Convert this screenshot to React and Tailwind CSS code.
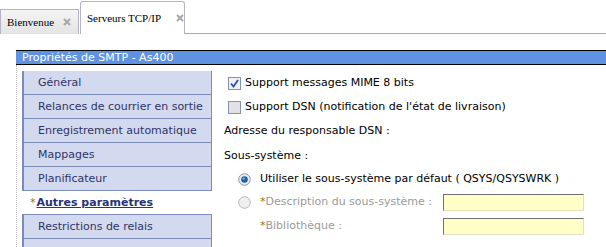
import React from "react"

const navItems = [
  "Général",
  "Relances de courrier en sortie",
  "Enregistrement automatique",
  "Mappages",
  "Planificateur",
  "Autres paramètres",
  "Restrictions de relais",
  "",
]

function CloseX() {
  return (
    <svg width="8" height="8" viewBox="0 0 8 8" className="shrink-0">
      <path d="M1 1 L7 7 M7 1 L1 7" stroke="#a8a8a8" strokeWidth="2" />
    </svg>
  )
}

function Checkbox({ checked }) {
  return (
    <span className={`w-[13px] h-[13px] border border-[#8593ac] flex items-center justify-center shrink-0 ${checked ? "bg-[#eef0f6]" : "bg-[#e2e2e6]"}`}>
      {checked && (
        <svg width="9" height="9" viewBox="0 0 9 9">
          <path d="M1 4.5 L3.5 7.5 L8 1" stroke="#2d4fa8" strokeWidth="1.8" fill="none" />
        </svg>
      )}
    </span>
  )
}

function Radio({ selected }) {
  return (
    <svg width="13" height="13" viewBox="0 0 13 13" className="shrink-0">
      <circle cx="6.5" cy="6.5" r="5.8" fill={selected ? "#e8ecf2" : "#efefef"} stroke={selected ? "#8a96a8" : "#b8b8b8"} strokeWidth="1" />
      {selected && <circle cx="6.5" cy="6.5" r="3.3" fill="#1f5fa8" />}
      {selected && <circle cx="5.8" cy="5.6" r="1.2" fill="#6fb0e8" />}
    </svg>
  )
}

export default function App() {
  return (
    <div className="w-[606px] h-[247px] overflow-hidden bg-white font-['DejaVu_Sans',sans-serif] text-[11px]">
      {/* onglets */}
      <div className="h-[34px] flex items-end">
        <div className="w-[79px] h-[25px] border border-b-0 border-[#b4b4c8] bg-gradient-to-b from-[#f4f4f4] to-[#e4e4e4] flex items-center pl-[6px] gap-[9px] font-['Liberation_Serif',serif] text-[11px] text-black whitespace-nowrap">
          <span>Bienvenue</span>
          <CloseX />
        </div>
        <div className="ml-[1px] w-[105px] h-[33px] border border-b-0 border-[#b4b4c8] rounded-t-[3px] bg-white flex items-center pl-[6px] gap-[15px] font-['Liberation_Serif',serif] text-[11px] text-black whitespace-nowrap">
          <span>Serveurs TCP/IP</span>
          <CloseX />
        </div>
        <div className="flex-1 border-b border-[#a8a8c0]" />
      </div>

      {/* panneau */}
      <div className="mt-[16px] ml-[16px]">
        <div className="h-[15px] border-y border-black bg-[#5f93e2] text-white pl-[6px] leading-[13px] text-[11px] whitespace-nowrap">
          Propriétés de SMTP - As400
        </div>
        <div className="flex border-l border-dotted border-[#c0c0c0] pl-[5px]">
          <div className="w-[190px] mt-[6px] shrink-0">
            {navItems.map((item, i) => {
              const active = item === "Autres paramètres"
              return active ? (
                <div key={i} className="h-[24px] pt-[2px] bg-white border-b border-[#7b8cb8] flex items-center pl-[8px] text-[#28337a]">
                  <span className="text-[#8a7420] mr-[1px]">*</span>
                  <span className="font-bold underline">{item}</span>
                </div>
              ) : (
                <div key={i} className="h-[24px] pt-[2px] bg-[#d3d9ef] border-l-2 border-r border-b border-[#7b8cb8] flex items-center pl-[14px] text-[#2f3566]">
                  {item}
                </div>
              )
            })}
          </div>

          <div className="flex-1 flex flex-col pt-[6px] text-black">
            <div className="h-[24px] flex items-center pl-[16px] gap-[4px]">
              <Checkbox checked />
              <span>Support messages MIME 8 bits</span>
            </div>
            <div className="h-[24px] flex items-center pl-[16px] gap-[4px]">
              <Checkbox />
              <span>Support DSN (notification de l'état de livraison)</span>
            </div>
            <div className="h-[25px] flex items-center pl-[12px]">Adresse du responsable DSN :</div>
            <div className="h-[24px] flex items-center pl-[12px]">Sous-système :</div>
            <div className="h-[22px] flex items-center pl-[26px] gap-[9px]">
              <Radio selected />
              <span>Utiliser le sous-système par défaut ( QSYS/QSYSWRK )</span>
            </div>
            <div className="h-[24px] flex items-center pl-[26px]">
              <Radio />
              <span className="ml-[9px] text-[#8a7420]">*</span>
              <span className="text-[#9a9a9a] w-[177px]">Description du sous-système :</span>
              <span className="w-[141px] h-[17px] bg-[#ffffc8] border-l border-t border-[#707070] border-r border-b border-r-[#e0e0c0] border-b-[#e0e0c0]" />
            </div>
            <div className="h-[24px] flex items-center pl-[48px]">
              <span className="text-[#8a7420]">*</span>
              <span className="text-[#9a9a9a] w-[177px]">Bibliothèque :</span>
              <span className="w-[141px] h-[17px] bg-[#ffffc8] border-l border-t border-[#707070] border-r border-b border-r-[#e0e0c0] border-b-[#e0e0c0]" />
            </div>
            <div className="h-[29px] flex items-center pl-[12px] whitespace-nowrap">
              Intervalle de temps de relance pour les courriers en attente :
            </div>
          </div>
        </div>
      </div>
    </div>
  )
}
